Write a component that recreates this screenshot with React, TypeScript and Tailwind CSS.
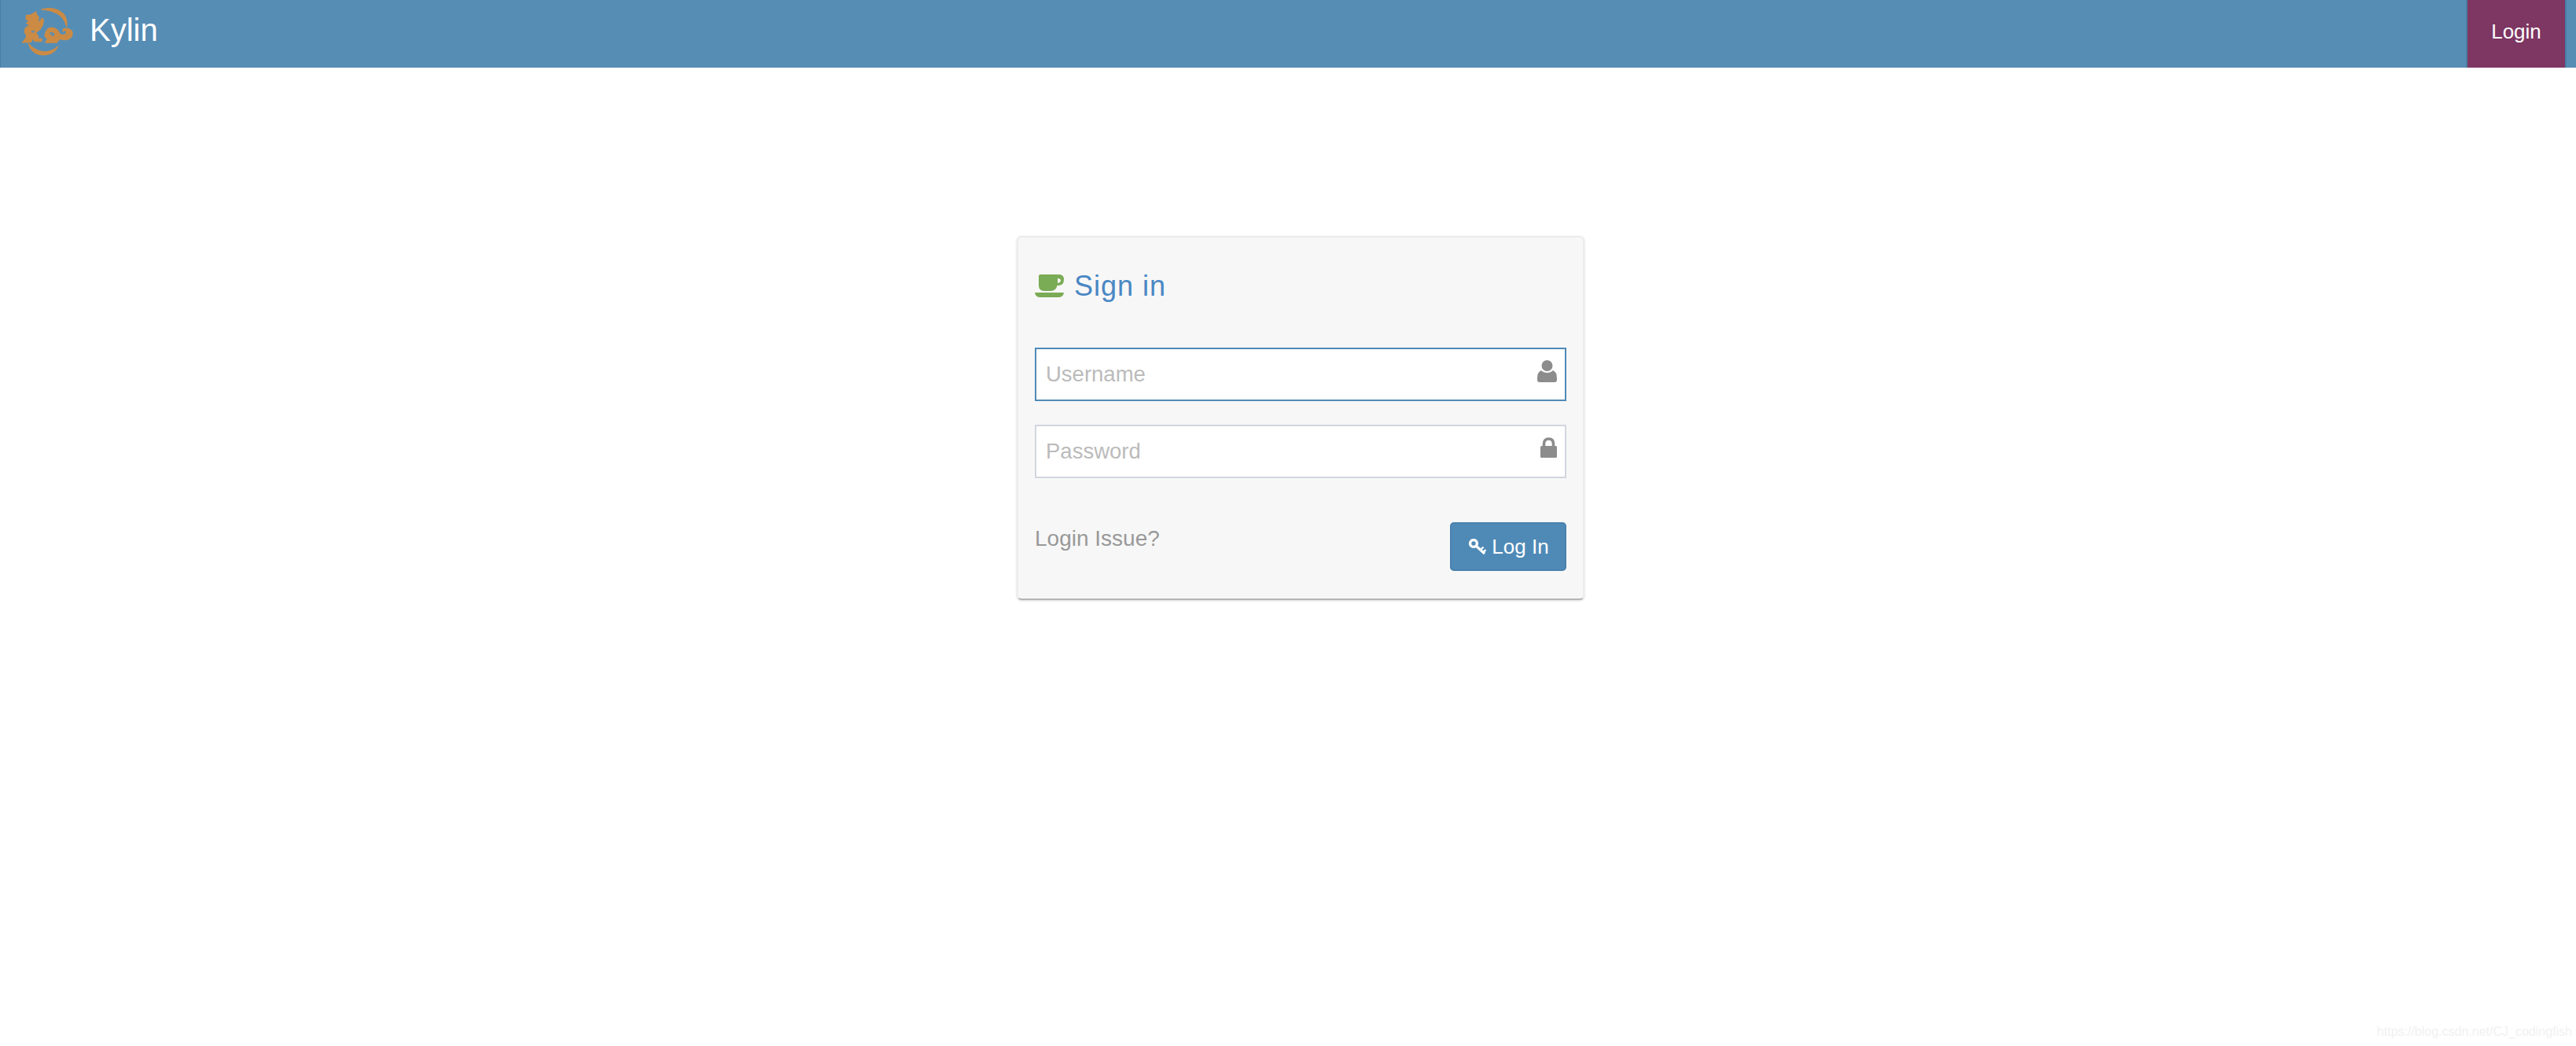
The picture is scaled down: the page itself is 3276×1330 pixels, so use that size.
import React from 'react';

const SANS = "font-['Liberation_Sans',Arial,sans-serif]";

function KylinLogo() {
  return (
    <svg viewBox="0 0 240 210" className="w-[80px] h-[70px]" fill="#cb8b45">
      {/* ring pieces */}
      <path d="M98 24 Q150 10 182 40 Q200 62 194 90 Q184 54 158 40 Q132 26 98 24Z" stroke="#cb8b45" strokeWidth="3" />
      <path d="M48 152 Q66 176 98 184 Q132 190 162 164 Q146 200 100 198 Q58 194 48 152Z" stroke="#cb8b45" strokeWidth="3" />
      {/* head and chest */}
      <path d="M38 46 L60 42 L78 30 L82 44 L90 54 L86 72 L102 54 L108 66 Q106 94 86 108 L78 114 Q92 124 86 134 L102 134 L100 148 L72 148 L66 138 L60 150 L22 152 L36 134 L40 122 Q26 112 36 94 L50 84 L38 76 L48 68 L38 62Z" />
      <path d="M60 106 Q70 102 74 112 Q68 110 62 114Z" fill="#568db5" />
      {/* back and tail */}
      <path d="M110 118 Q118 88 142 92 Q162 96 168 114 Q178 124 190 116 Q194 110 188 106 Q182 106 182 112 Q174 104 182 96 Q202 90 216 106 Q224 126 204 138 Q186 146 170 138 L156 152 L110 152 L120 136 Q106 130 110 118Z" />
      <path d="M128 116 Q136 106 146 114 Q150 124 142 126 Q134 122 128 116Z" fill="#568db5" />
      <path d="M135 117 Q139 113 142 117 Q141 121 137 120Z" />
    </svg>
  );
}

function CupIcon() {
  return (
    <svg viewBox="0 0 37 29" className="w-[37px] h-[29px]" fill="#7aab55">
      <path
        fillRule="evenodd"
        d="M5 2 Q5 0 7 0 H31 Q37 0 37 6.5 Q37 14 30 14 H28.5 Q27 21 20 21 H12 Q5 21 5 14 Z M29 5 V11 Q33 10 33 7.5 Q33 5 29 5 Z"
      />
      <path d="M0 23 H37 Q36 29 30 29 H7 Q1 29 0 23Z" />
    </svg>
  );
}

function UserIcon() {
  return (
    <svg viewBox="0 0 25 28" className="w-[25px] h-[28px]" fill="#8c8c8c">
      <circle cx="12.5" cy="7" r="7" />
      <path d="M5 13 Q8 16 12.5 16 Q17 16 20 13 Q25 15 25 23 V25 Q25 28 22 28 H3 Q0 28 0 25 V23 Q0 15 5 13Z" />
    </svg>
  );
}

function LockIcon() {
  return (
    <svg viewBox="0 0 21 26" className="w-[21px] h-[26px]">
      <path d="M4.5 12 V8.5 Q4.5 2 10.5 2 Q16.5 2 16.5 8.5 V12" fill="none" stroke="#8c8c8c" strokeWidth="3.6" />
      <rect x="0" y="11" width="21" height="15" rx="1.5" fill="#8c8c8c" />
    </svg>
  );
}

function KeyIcon() {
  return (
    <svg viewBox="0 0 22 20" className="w-[22px] h-[20px]" fill="none" stroke="#fff">
      <circle cx="6" cy="6" r="4.4" strokeWidth="3.4" />
      <path d="M9 9 L20 19" strokeWidth="3.2" />
      <path d="M15 14 L18.5 10.5 M18.5 17 L21.5 14" strokeWidth="2.4" />
    </svg>
  );
}

export default function App() {
  return (
    <div className={`relative min-h-screen bg-white flex flex-col ${SANS}`}>
      {/* Navbar */}
      <div className="h-[86px] bg-[#568db5] border-l border-[#4a7ea5] flex items-stretch pr-[12px]">
        <div className="ml-[19px] mb-[8px] flex items-center">
          <KylinLogo />
        </div>
        <span className="ml-[14px] text-[40px] leading-[76px] text-white">Kylin</span>
        <button className="ml-auto w-[128px] bg-[#7e3663] border-x-2 border-[#4a7ea5] text-[26px] text-white pb-[6px]">
          Login
        </button>
      </div>

      {/* Login box */}
      <div className="flex justify-center pl-[32px] pt-[214px]">
        <div className="w-[722px] bg-[#f7f7f7] rounded-[6px] border-2 border-t-[#ececec] border-x-[#ececec] border-b-[#b5b5b5] px-[21px] pt-[47px] pb-[35px] shadow-[0_1px_3px_rgba(0,0,0,0.15)]">
          <div className="flex items-center gap-[13px] h-[29px]">
            <CupIcon />
            <h4 className="text-[36px] leading-[27px] tracking-[1px] text-[#4a87c4]">Sign in</h4>
          </div>

          <div className="relative mt-[64px]">
            <input
              placeholder="Username"
              className="w-full h-[68px] bg-white border-2 border-[#4f8ab7] pl-[12px] pr-[50px] text-[27.5px] outline-none placeholder:text-[#bbbbbb]"
            />
            <span className="absolute right-[12px] top-[16px] flex">
              <UserIcon />
            </span>
          </div>

          <div className="relative mt-[30px]">
            <input
              type="text"
              placeholder="Password"
              className="w-full h-[68px] bg-white border-2 border-[#d2d6de] pl-[12px] pr-[50px] text-[27.5px] outline-none placeholder:text-[#bbbbbb]"
            />
            <span className="absolute right-[12px] top-[16px] flex">
              <LockIcon />
            </span>
          </div>

          <div className="mt-[56px] flex items-start justify-between">
            <span className="text-[28px] leading-[40px] text-[#999999] mt-[1px]">Login Issue?</span>
            <button className="w-[148px] h-[62px] bg-[#4f8ab7] border-2 border-[#4a82ad] rounded-[5px] flex items-center justify-center gap-[7px] text-[26px] text-white pl-[2px]">
              <KeyIcon />
              Log In
            </button>
          </div>
        </div>
      </div>

      {/* Watermark */}
      <span className="absolute right-[5px] bottom-[8px] text-[16px] leading-[20px] text-[#f1f1f1]">
        https://blog.csdn.net/CJ_codingfish
      </span>
    </div>
  );
}
